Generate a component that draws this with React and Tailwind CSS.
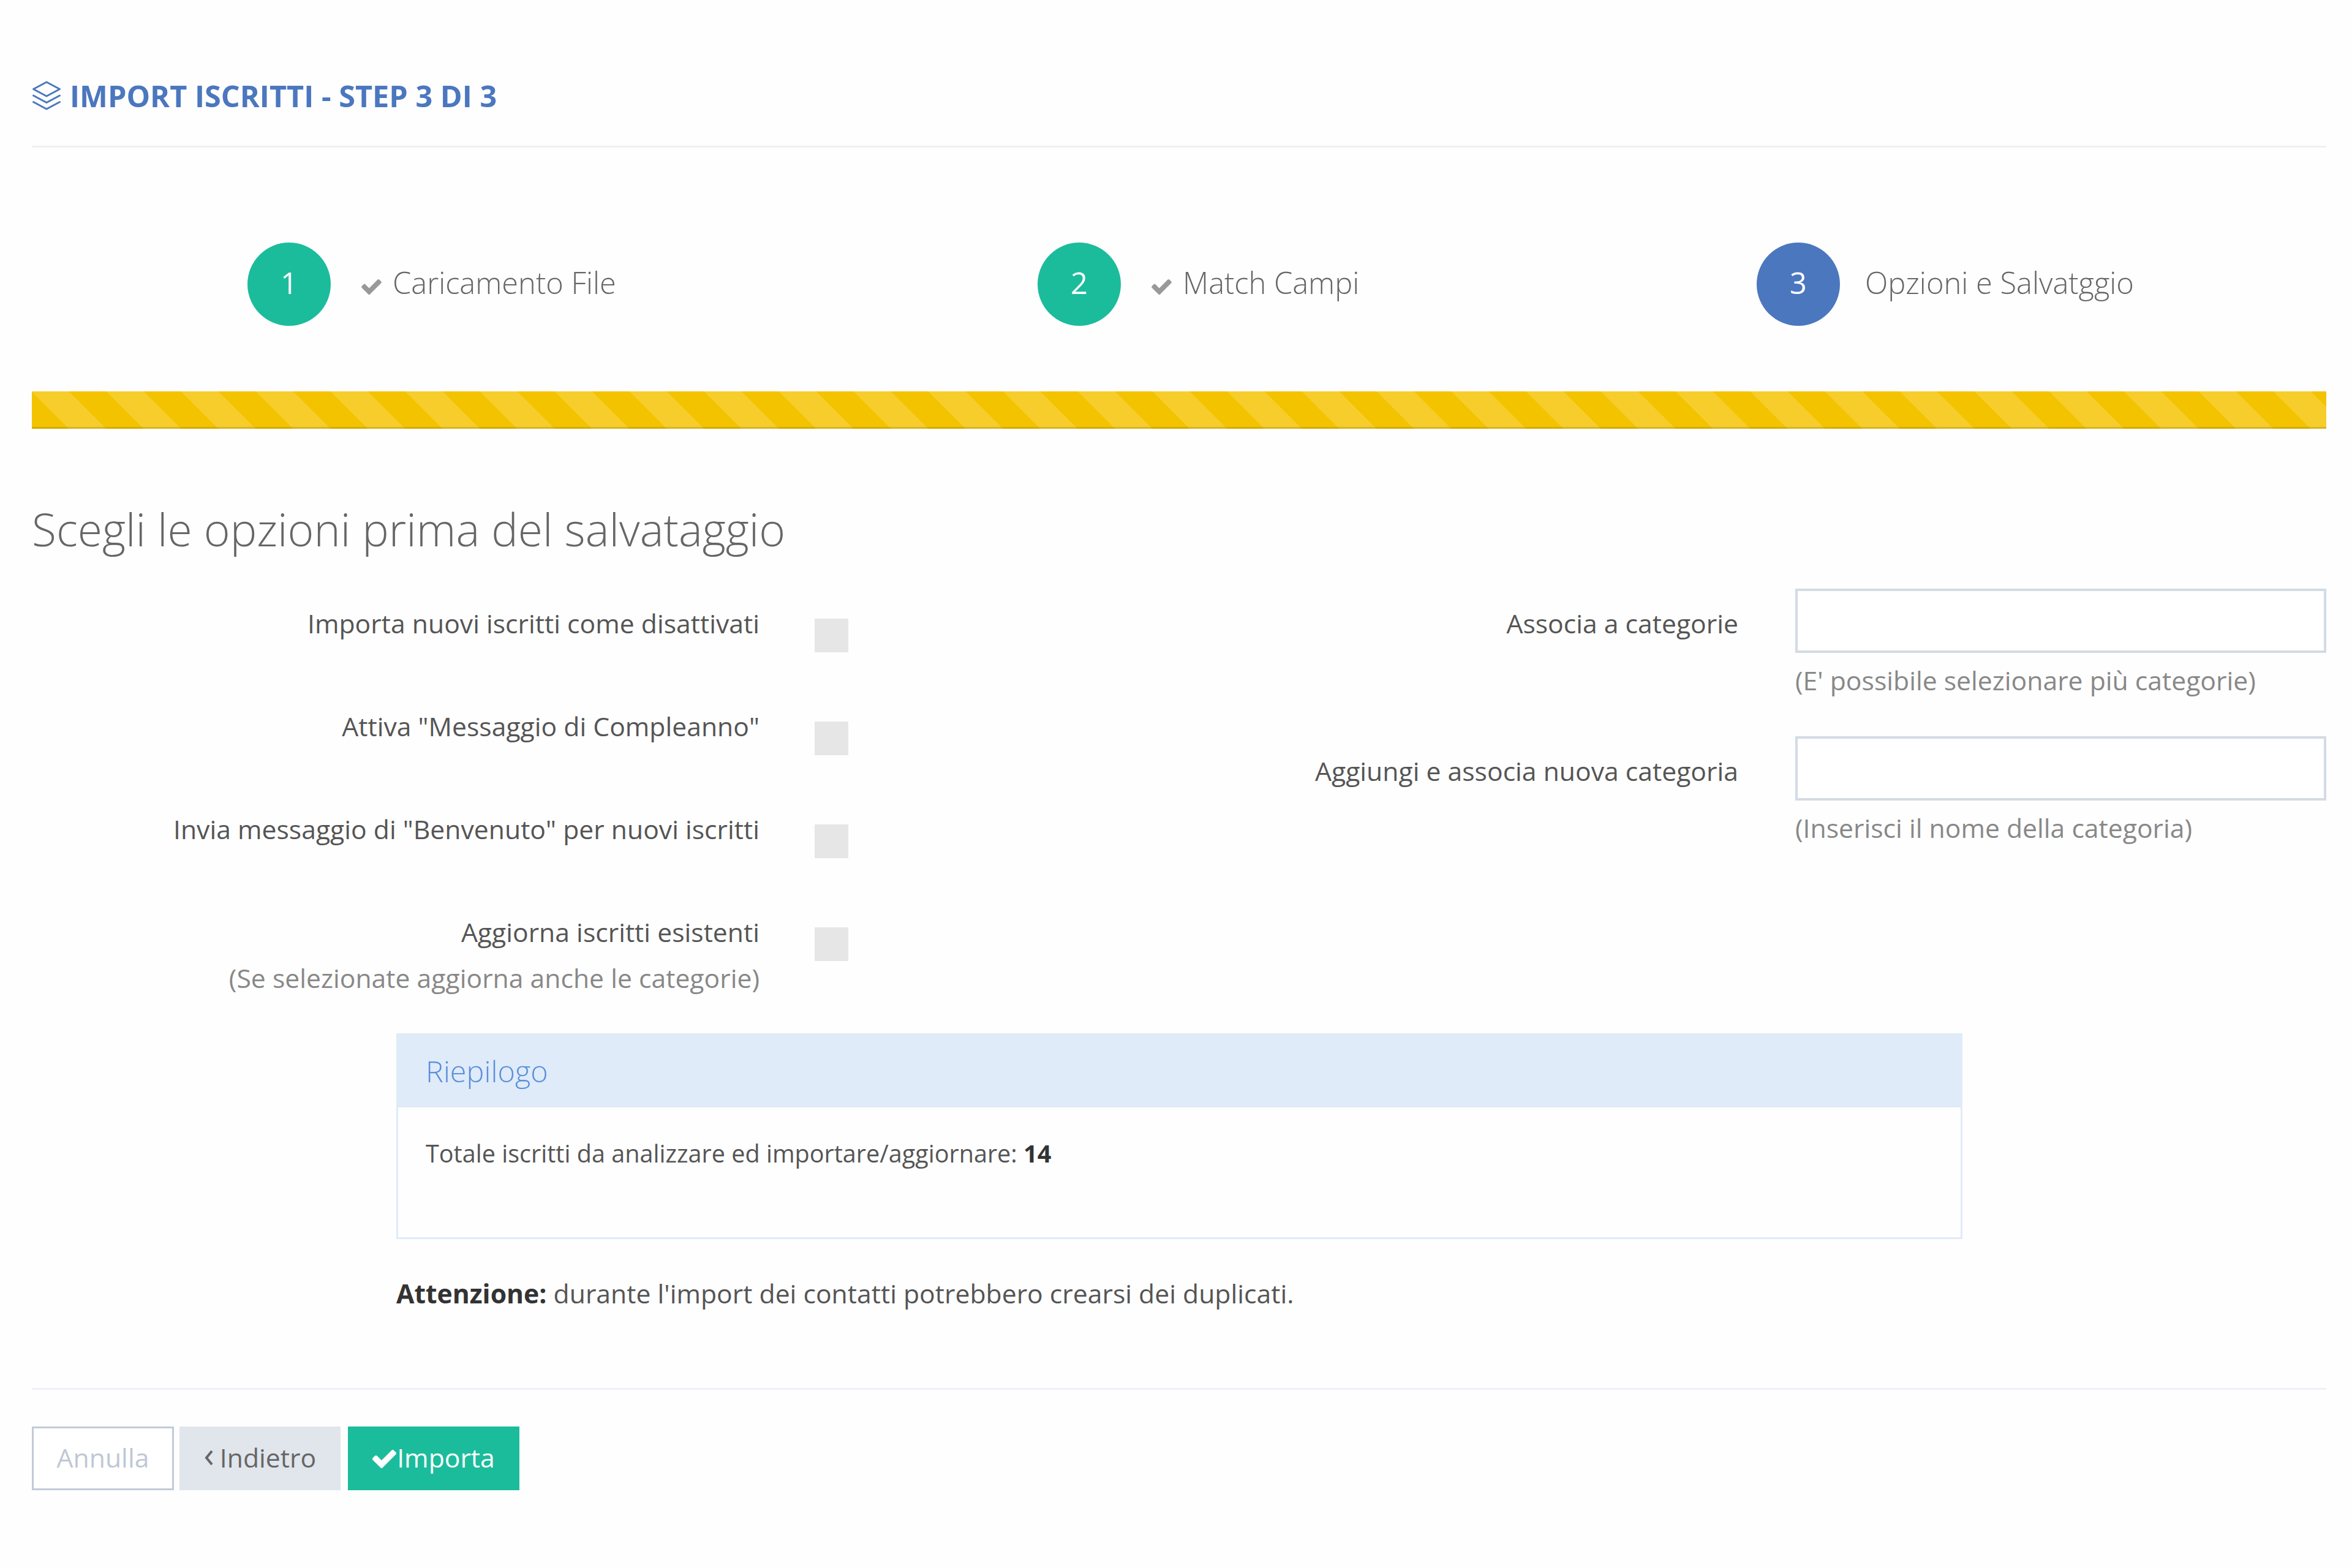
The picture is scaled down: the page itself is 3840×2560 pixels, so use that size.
const steps = [
    { number: 1, title: "Caricamento File", done: true, className: "ml-[352px] w-[1290px]" },
    { number: 2, title: "Match Campi", done: true, className: "w-[1174px]" },
    { number: 3, title: "Opzioni e Salvatggio", done: false, className: "" },
]

const options = [
    { label: "Importa nuovi iscritti come disattivati" },
    { label: 'Attiva "Messaggio di Compleanno"' },
    { label: 'Invia messaggio di "Benvenuto" per nuovi iscritti' },
    { label: "Aggiorna iscritti esistenti", help: "(Se selezionate aggiorna anche le categorie)" },
]

const fields = [
    { label: "Associa a categorie", help: "(E' possibile selezionare più categorie)" },
    { label: "Aggiungi e associa nuova categoria", help: "(Inserisci il nome della categoria)" },
]

function LayersIcon() {
    return (
        <svg viewBox="0 0 48 48" className="w-[48px] h-[48px]" fill="none" stroke="currentColor" strokeWidth="3" strokeLinejoin="round" strokeLinecap="round">
            <path d="M24 2 L45.5 13.5 L24 25 L2.500 13.5 Z" />
            <path d="M2.500 24 L24 35.500 L45.500 24" />
            <path d="M2.500 34.500 L24 46 L45.500 34.500" />
        </svg>
    )
}

function CheckIcon({ className }) {
    return (
        <svg viewBox="121 334 1550 1188" className={className} fill="currentColor">
            <path d="M1671 566q0 40-28 68l-724 724-136 136q-28 28-68 28t-68-28l-136-136-362-362q-28-28-28-68t28-68l136-136q28-28 68-28t68 28l294 295 656-657q28-28 68-28t68 28l136 136q28 28 28 68z" />
        </svg>
    )
}

function Step({ number, title, done, className }) {
    return (
        <div className={`flex items-center ${className}`}>
            <div className={`flex items-center justify-center w-[136px] h-[136px] rounded-full text-white text-[48.8px] font-normal pb-[3px] ${done ? "bg-[#1bbc9b]" : "bg-[#4b77be]"}`}>
                {number}
            </div>
            {done && <CheckIcon className="ml-[50px] mt-[9px] w-[33px] h-[25px] text-[#999]" />}
            <span className={`pb-[3px] text-[48.8px] text-[#666] ${done ? "ml-[18px]" : "ml-[41px]"}`}>{title}</span>
        </div>
    )
}

function App() {
    return (
        <div className="w-[3840px] h-[2560px] bg-[#fefefe] pl-[52px] pr-[42px] overflow-hidden font-['Open_Sans',sans-serif] text-[#555] text-[42.7px]">
            {/* Title */}
            <div className="flex items-center gap-[14px] h-[241px] pt-[74px] border-b-[3px] border-[#eef0f1] text-[#4b77be]">
                <LayersIcon />
                <h1 className="text-[48.6px] font-bold leading-[60px]">IMPORT ISCRITTI - STEP 3 DI 3</h1>
            </div>

            {/* Wizard steps */}
            <div className="flex items-center mt-[154px] h-[137px] font-light">
                {steps.map((step) => (
                    <Step key={step.number} {...step} />
                ))}
            </div>

            <div className="mt-[107px] h-[61px] bg-[#f4c300] bg-[linear-gradient(45deg,rgba(255,255,255,.17)_25%,transparent_25%,transparent_50%,rgba(255,255,255,.17)_50%,rgba(255,255,255,.17)_75%,transparent_75%,transparent)] bg-[length:122px_122px] shadow-[inset_0_-3px_0_rgba(0,0,0,0.12)]" />

            <h2 className="mt-[114px] h-[100px] text-[73.2px] leading-[100px] font-light text-[#666]">
                Scegli le opzioni prima del salvataggio
            </h2>

            {/* Form */}
            <div className="flex h-[726px] mt-[47px]">
                <div className="w-[2094px]">
                    {options.map((option) => (
                        <div key={option.label} className="flex h-[168px]">
                            <div className="w-[1188px] text-right leading-[75px] pt-[19px] whitespace-nowrap">
                                <p>{option.label}</p>
                                {option.help && <p className="text-[#888]">{option.help}</p>}
                            </div>
                            <div className="ml-[90px] mt-[49px] w-[55px] h-[55px] bg-[#e6e6e6]" />
                        </div>
                    ))}
                </div>
                <div className="flex-1">
                    {fields.map((field) => (
                        <div key={field.label} className="flex h-[241px]">
                            <div className="w-[692px] text-right leading-[75px] pt-[19px] whitespace-nowrap">{field.label}</div>
                            <div className="ml-[93px] flex-1">
                                <input type="text" className="block w-full h-[105px] border-[4px] border-[#d3dbe4] bg-white" />
                                <p className="leading-[76px] mt-[7px] text-[#888] whitespace-nowrap">{field.help}</p>
                            </div>
                        </div>
                    ))}
                </div>
            </div>

            {/* Summary */}
            <div className="ml-[595px] w-[2557px] h-[336px] border-[3px] border-[#e0ebf9]">
                <div className="h-[118px] pl-[45px] bg-[#dfebf9] text-[48.6px] leading-[116px] font-light text-[#5b8fdb]">Riepilogo</div>
                <p className="pl-[45px] mt-[45px] text-[39.6px] leading-[60px]">
                    Totale iscritti da analizzare ed importare/aggiornare: <b className="text-[#333]">14</b>
                </p>
            </div>
            <p className="ml-[595px] mt-[59px] leading-[60px]">
                <b className="text-[#333]">Attenzione:</b> durante l'import dei contatti potrebbero crearsi dei duplicati.
            </p>

            {/* Actions */}
            <div className="flex mt-[124px] pt-[60px] border-t-[3px] border-[#eef1f5]">
                <button className="w-[232px] h-[104px] pb-[2px] border-[3px] border-[#c2cad8] text-[#bfc7d5] bg-white">Annulla</button>
                <button className="flex items-center justify-center ml-[9px] w-[263px] h-[104px] pb-[2px] bg-[#e1e5ec] text-[#666]">
                    <svg viewBox="0 0 16 26" className="w-[16px] h-[26px] mr-[10px]" fill="none" stroke="currentColor" strokeWidth="4">
                        <path d="M13 2 L4 13 L13 24" />
                    </svg>
                    Indietro
                </button>
                <button className="flex items-center justify-center ml-[12px] w-[280px] h-[104px] pb-[2px] bg-[#1bbc9b] text-white">
                    <CheckIcon className="w-[39px] h-[30px] mt-[3px] mr-[1px]" />
                    Importa
                </button>
            </div>
        </div>
    )
}

export default App
